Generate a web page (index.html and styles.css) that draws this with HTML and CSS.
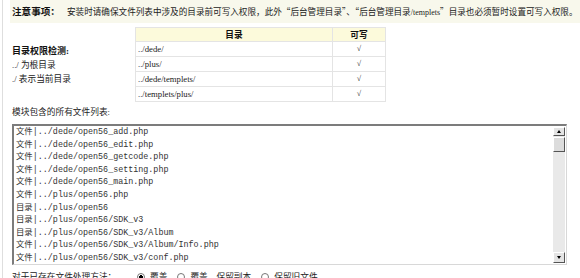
FILE: index.html
```html
<!DOCTYPE html>
<html lang="zh-CN">
<head>
    <meta charset="UTF-8">
    <title>模块安装</title>
    <link rel="stylesheet" href="styles.css">
</head>
<body>
    <div class="frame">
        <div class="notice">
            <b>注意事项：</b>
            <span class="notice-text">安装时请确保文件列表中涉及的目录前可写入权限，此外“后台管理目录”、“后台管理目录<small>/templets</small>”目录也必须暂时设置可写入权限。</span>
        </div>

        <div class="perm">
            <div class="perm-info">
                <b>目录权限检测:</b>
                <span>../ 为根目录</span>
                <span>./ 表示当前目录</span>
            </div>
            <table class="perm-table">
                <tr><th class="col-dir">目录</th><th class="col-ok">可写</th></tr>
                <tr><td>../dede/</td><td class="ok">√</td></tr>
                <tr><td>../plus/</td><td class="ok">√</td></tr>
                <tr><td>../dede/templets/</td><td class="ok">√</td></tr>
                <tr><td>../templets/plus/</td><td class="ok">√</td></tr>
            </table>
        </div>

        <div class="list-label">模块包含的所有文件列表:</div>
        <div class="filebox">
            <div class="filebox-text">
                <div>文件|../dede/open56_add.php</div>
                <div>文件|../dede/open56_edit.php</div>
                <div>文件|../dede/open56_getcode.php</div>
                <div>文件|../dede/open56_setting.php</div>
                <div>文件|../dede/open56_main.php</div>
                <div>文件|../plus/open56.php</div>
                <div>目录|../plus/open56</div>
                <div>目录|../plus/open56/SDK_v3</div>
                <div>目录|../plus/open56/SDK_v3/Album</div>
                <div>文件|../plus/open56/SDK_v3/Album/Info.php</div>
                <div>文件|../plus/open56/SDK_v3/conf.php</div>
            </div>
            <div class="scrollbar">
                <span class="sb-btn sb-up"></span>
                <span class="sb-thumb"></span>
                <span class="sb-track"></span>
                <span class="sb-btn sb-down"></span>
            </div>
        </div>

        <div class="exists">
            <span class="exists-label">对于已存在文件处理方法：</span>
            <label class="opt"><input type="radio" name="isreplace" checked> 覆盖</label>
            <label class="opt"><input type="radio" name="isreplace"> 覆盖，保留副本</label>
            <label class="opt"><input type="radio" name="isreplace"> 保留旧文件</label>
        </div>
    </div>
</body>
</html>
```

FILE: styles.css
```css
body {
    margin: 0;
    font-family: "Liberation Serif", "Noto Sans CJK SC", serif;
    font-size: 8.7px;
    color: #222;
    background-color: #fff;
    overflow: hidden;
}

.frame {
    margin-left: 2px;
    border-left: 1px solid #dedede;
    padding-left: 9px;
    min-height: 278px;
}

.notice {
    display: flex;
    align-items: center;
    gap: 7px;
    height: 23px;
    margin-left: -2px;
    padding-left: 2px;
    background-color: #f8f8ec;
    white-space: nowrap;
    line-height: 12px;
}

.notice b {
    font-size: 9.6px;
    color: #111;
}

.notice-text {
    font-family: "Noto Sans CJK SC", sans-serif;
    font-size: 8.6px;
}

.notice small {
    font-family: "Liberation Serif", serif;
    font-size: 8px;
}

.perm {
    display: flex;
    align-items: center;
    margin-top: 4px;
}

.perm-info {
    display: flex;
    flex-direction: column;
    width: 123px;
    line-height: 14px;
}

.perm-info b {
    font-size: 9px;
    color: #111;
}

.perm-table {
    border-collapse: collapse;
    width: 251px;
    font-size: 8.7px;
}

.perm-table th,
.perm-table td {
    border: 1px solid #e4e4e4;
    padding: 0 2px;
    line-height: 12px;
}

.perm-table th {
    height: 13px;
    background-color: #fcfadb;
    font-size: 8.7px;
    font-weight: bold;
    color: #111;
}

.perm-table td {
    height: 14px;
}

.col-dir {
    width: 192px;
}

.perm-table .ok {
    text-align: center;
    font-size: 8px;
}

.list-label {
    margin-top: 4px;
    line-height: 12px;
}

.filebox {
    display: flex;
    width: 552px;
    height: 138px;
    margin-top: 6px;
    border-top: 2px solid #7c7c7c;
    border-left: 2px solid #7c7c7c;
    border-right: 1px solid #d8d8d8;
    border-bottom: 1px solid #d8d8d8;
    background-color: #fff;
}

.filebox-text {
    flex: 1;
    padding: 0 2px;
    font-family: "Liberation Mono", "Noto Sans CJK SC", monospace;
    font-size: 8.4px;
    line-height: 12.6px;
    color: #333;
    white-space: nowrap;
    overflow: hidden;
}

.scrollbar {
    display: flex;
    flex-direction: column;
    width: 12px;
    margin: 1px 1px 1px 0;
    background-color: #e9e9e9;
}

.sb-btn {
    position: relative;
    height: 9px;
    background-color: #e4e4e4;
    border: 1px solid #fff;
    border-right-color: #555;
    border-bottom-color: #555;
    box-sizing: border-box;
}

.sb-btn::after {
    content: "";
    position: absolute;
    left: 3px;
    top: 2px;
    border-left: 2px solid transparent;
    border-right: 2px solid transparent;
}

.sb-up::after {
    border-bottom: 3px solid #000;
}

.sb-down {
    height: 11px;
}

.sb-down::after {
    top: 3px;
    border-top: 3px solid #000;
}

.sb-thumb {
    height: 15px;
    margin-top: 1px;
    background-color: #dcdcdc;
    border: 1px solid #fff;
    border-right-color: #555;
    border-bottom-color: #555;
    box-sizing: border-box;
}

.sb-track {
    flex: 1;
}

.exists {
    display: flex;
    align-items: center;
    margin-top: 6px;
    line-height: 12px;
    white-space: nowrap;
}

.exists-label {
    width: 125px;
}

.opt {
    display: flex;
    align-items: center;
    gap: 5px;
    margin-right: 10px;
}

.opt input {
    appearance: none;
    width: 8px;
    height: 8px;
    margin: 0;
    border: 1px solid #777;
    border-radius: 50%;
    background-color: #fff;
}

.opt input:checked {
    background: radial-gradient(circle, #000 0 1.6px, #fff 2px);
}
```
